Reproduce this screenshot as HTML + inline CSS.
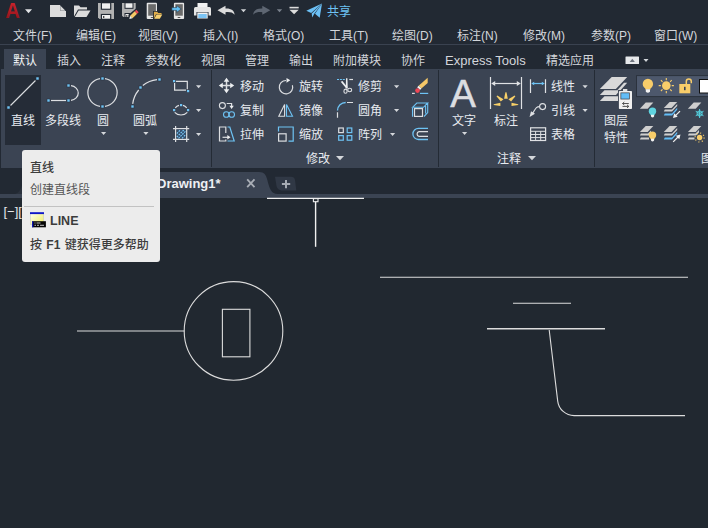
<!DOCTYPE html>
<html lang="zh-CN">
<head>
<meta charset="utf-8">
<title>AutoCAD</title>
<style>
html,body{margin:0;padding:0;}
body{width:708px;height:528px;overflow:hidden;background:#212830;position:relative;
 font-family:"Liberation Sans","Noto Sans CJK SC",sans-serif;font-size:12px;color:#e6e9ee;}
.abs{position:absolute;}
.t{z-index:2;position:absolute;white-space:nowrap;line-height:16px;height:16px;color:#e8ebf0;}
#top{left:0;top:0;width:708px;height:44px;background:#222933;}
#sep1{left:0;top:44px;width:708px;height:1px;background:#3a4250;}
#tabrow{left:0;top:45px;width:708px;height:24px;background:#222933;}
#acttab{left:4px;top:49px;width:42px;height:21px;background:#3b4453;}
#ribbon{left:1px;top:69px;width:707px;height:99px;background:#3b4453;}
#ribbonL{left:0;top:69px;width:1px;height:99px;background:#222933;}
#gap{left:0;top:168px;width:708px;height:26px;background:#222933;}
#band{left:0;top:194px;width:708px;height:4px;background:#3b4453;}
.vsep{position:absolute;width:1px;background:#242b35;top:70px;height:97px;}
#linebtn{left:5px;top:75px;width:36px;height:70px;background:#252c37;}
#tip{z-index:4;left:22px;top:150px;width:138px;height:112px;background:#ececec;border-radius:3px;}
.m{color:#d3d6db;}
.tt{z-index:6;position:absolute;white-space:nowrap;line-height:16px;height:16px;color:#3a3a3a;}
svg{position:absolute;left:0;top:0;overflow:visible;}
</style>
</head>
<body>
<div class="abs" id="top"></div>
<div class="abs" id="sep1"></div>
<div class="abs" id="tabrow"></div>
<div class="abs" id="acttab"></div>
<div class="abs" id="ribbon"></div>
<div class="abs" id="ribbonL"></div>
<div class="abs" id="gap"></div>
<div class="abs" id="band"></div>
<div class="vsep" style="left:211px"></div>
<div class="vsep" style="left:438px"></div>
<div class="vsep" style="left:594px"></div>
<div class="abs" id="linebtn"></div>

<!-- menu bar -->
<div class="t m" style="left:13px;top:28px">文件(F)</div>
<div class="t m" style="left:76px;top:28px">编辑(E)</div>
<div class="t m" style="left:138px;top:28px">视图(V)</div>
<div class="t m" style="left:203px;top:28px">插入(I)</div>
<div class="t m" style="left:263px;top:28px">格式(O)</div>
<div class="t m" style="left:329px;top:28px">工具(T)</div>
<div class="t m" style="left:392px;top:28px">绘图(D)</div>
<div class="t m" style="left:457px;top:28px">标注(N)</div>
<div class="t m" style="left:523px;top:28px">修改(M)</div>
<div class="t m" style="left:591px;top:28px">参数(P)</div>
<div class="t m" style="left:654px;top:28px">窗口(W)</div>
<div class="t" style="left:327px;top:4px;color:#6ec3f4">共享</div>

<!-- ribbon tabs -->
<div class="t" style="left:13px;top:53px;color:#f2f4f7">默认</div>
<div class="t m" style="left:57px;top:53px">插入</div>
<div class="t m" style="left:101px;top:53px">注释</div>
<div class="t m" style="left:145px;top:53px">参数化</div>
<div class="t m" style="left:201px;top:53px">视图</div>
<div class="t m" style="left:245px;top:53px">管理</div>
<div class="t m" style="left:289px;top:53px">输出</div>
<div class="t m" style="left:333px;top:53px">附加模块</div>
<div class="t m" style="left:401px;top:53px">协作</div>
<div class="t m" style="left:445px;top:53px;font-size:13px">Express Tools</div>
<div class="t m" style="left:546px;top:53px">精选应用</div>

<!-- ribbon labels -->
<div class="t" style="left:11px;top:113px">直线</div>
<div class="t" style="left:45px;top:113px">多段线</div>
<div class="t" style="left:97px;top:113px">圆</div>
<div class="t" style="left:133px;top:113px">圆弧</div>
<div class="t" style="left:240px;top:79px">移动</div>
<div class="t" style="left:240px;top:103px">复制</div>
<div class="t" style="left:240px;top:127px">拉伸</div>
<div class="t" style="left:299px;top:79px">旋转</div>
<div class="t" style="left:299px;top:103px">镜像</div>
<div class="t" style="left:299px;top:127px">缩放</div>
<div class="t" style="left:358px;top:79px">修剪</div>
<div class="t" style="left:358px;top:103px">圆角</div>
<div class="t" style="left:358px;top:127px">阵列</div>
<div class="t" style="left:306px;top:151px">修改</div>
<div class="t" style="left:452px;top:113px">文字</div>
<div class="t" style="left:494px;top:113px">标注</div>
<div class="t" style="left:551px;top:79px">线性</div>
<div class="t" style="left:551px;top:103px">引线</div>
<div class="t" style="left:551px;top:127px">表格</div>
<div class="t" style="left:497px;top:151px">注释</div>
<div class="t" style="left:604px;top:113px">图层</div>
<div class="t" style="left:604px;top:130px">特性</div>
<div class="t" style="left:701px;top:151px">图层</div>

<!-- doc tab -->
<div class="t" style="left:157px;top:176px;font-weight:bold;font-size:13px;color:#eef0f3">Drawing1*</div>
<div class="t" style="left:3.5px;top:204px;color:#e4e6e9;font-size:13px">[−][</div>

<svg id="art" width="708" height="528" viewBox="0 0 708 528">
<!-- ===== quick access toolbar ===== -->
<defs>
 <linearGradient id="ag" x1="0" y1="0" x2="0" y2="1"><stop offset="0" stop-color="#d4252d"/><stop offset="0.5" stop-color="#b01b23"/><stop offset="1" stop-color="#7a1117"/></linearGradient>
</defs>
<g id="qat">
 <!-- A logo -->
 <text x="5.300" y="18.300" font-family="Liberation Sans, sans-serif" font-weight="bold" font-size="21.500" fill="url(#ag)" textLength="14.600" lengthAdjust="spacingAndGlyphs">A</text>
 <path d="M25 9.300h7l-3.500 4z" fill="#e3e5e8"/>
 <!-- new -->
 <path d="M50 5h10l6 6v6H50z" fill="#dcdcdc"/>
 <path d="M60.500 5v6h6V5z" fill="#222933"/>
 <path d="M60.500 5.800V10.800H65.500z" fill="#dcdcdc"/>
 <!-- open -->
 <path d="M74 16.500V5.500h5l1.500 1.800h6.500V9.500H78z" fill="#dcdcdc"/>
 <path d="M74.800 17L78.600 10.500H90.500L86.500 17z" fill="#dcdcdc"/>
 <!-- save -->
 <g id="save">
  <path d="M98 3h16v16H99.500L98 17.500z" fill="#b2b2b2"/>
  <rect x="100.800" y="2.500" width="10.500" height="7.300" fill="#222933"/>
  <rect x="102" y="3.300" width="8.100" height="5.400" fill="#f0f0f0"/>
  <rect x="100.800" y="13.900" width="10.500" height="5.500" fill="#222933"/>
  <rect x="102" y="15" width="8.100" height="3.700" fill="#f0f0f0"/>
  <rect x="103.100" y="16" width="1.200" height="2" fill="#333"/>
 </g>
 <!-- save as -->
 <g>
  <path d="M122 3h13.700v9.500l-4.500 4.500H123.300L122 15.700z" fill="#b2b2b2"/>
  <rect x="124.500" y="2.500" width="9" height="6.300" fill="#222933"/>
  <rect x="125.500" y="3.300" width="7" height="4.500" fill="#f0f0f0"/>
  <rect x="124.500" y="13" width="5.500" height="4.500" fill="#222933"/>
  <rect x="125.500" y="14" width="3.500" height="3" fill="#f0f0f0"/>
  <rect x="126.300" y="15" width="1" height="2" fill="#333"/>
  <path d="M128.400 14.800L136.300 8.300L140.200 12.200L132.800 20L128.200 20.300z" fill="#222933"/>
  <path d="M130.100 15.800L134.800 11.300L137.100 13.700L132.500 18.300z" fill="#f4c866"/>
  <path d="M134.800 11.300L136.300 9.800L138.700 12.200L137.100 13.700z" fill="#ee4654"/>
  <path d="M130.100 15.800L132.500 18.300L129.300 19.100z" fill="#f4f4f4"/>
 </g>
 <!-- open from mobile -->
 <g>
  <rect x="146.700" y="2.700" width="10.300" height="16.400" rx="1" fill="#e6e6e6"/>
  <rect x="148.200" y="4.200" width="7.700" height="11.500" fill="#6a6a6a"/>
  <rect x="150.800" y="17" width="2.600" height="1" fill="#555"/>
  <path d="M153 19.300V11h5l1 1.300h3.700V19.300z" fill="#222933"/>
  <path d="M153.900 18.500V11.700h3.300l1 1.200h3.300V14.300H156z" fill="#e0ac48"/>
  <path d="M154.200 18.800L156.600 14.500h5.700L159.800 18.800z" fill="#f8d070"/>
 </g>
 <!-- save to mobile -->
 <g>
  <rect x="173.900" y="2.700" width="10.200" height="16.400" rx="1" fill="#e6e6e6"/>
  <rect x="175.300" y="4.200" width="7.500" height="11.500" fill="#6a6a6a"/>
  <rect x="177.700" y="17" width="2.600" height="1" fill="#555"/>
  <path d="M171.800 7.600h4.800V5.600l4.600 3.400l-4.600 3.400v-2h-4.800z" fill="#63c0f5" stroke="#222933" stroke-width="0.500"/>
 </g>
 <!-- print -->
 <g>
  <rect x="197.500" y="3" width="10" height="5" fill="#f2f2f2"/>
  <path d="M194 8.500q0-1.500 1.500-1.500h14q1.500 0 1.500 1.500V15.500H194z" fill="#e6e6e6"/>
  <rect x="196.500" y="12" width="12" height="7" fill="#222933"/>
  <rect x="197.300" y="12.500" width="10.400" height="6" fill="#f2f2f2"/>
  <rect x="198.300" y="14" width="8.400" height="4" fill="#7cc4f4"/>
 </g>
 <!-- undo -->
 <path d="M217.500 10.300L225.500 5.800V8.600C231 8.300 234.300 10.500 234.600 14.700C232.500 12.300 229.500 11.800 225.500 12.200V14.800z" fill="#dcdcdc"/>
 <path d="M240.800 9.300h5.400l-2.700 2.900z" fill="#cfd2d6"/>
 <!-- redo -->
 <path d="M269.800 10.300L261.800 5.800V8.600C256.300 8.300 253 10.500 252.700 14.700C254.800 12.300 257.800 11.800 261.800 12.200V14.800z" transform="translate(0.500 0)" fill="#5e6672"/>
 <path d="M276.800 9.300h5.400l-2.700 2.900z" fill="#7b828d"/>
 <!-- customize -->
 <rect x="289.500" y="6.800" width="9.200" height="1.600" fill="#dcdcdc"/>
 <path d="M289.500 9.800h9.200l-4.600 4.400z" fill="#dcdcdc"/>
 <!-- share plane -->
 <path d="M306.300 10.700L322 3.600L311.200 12.900z" fill="#6cc0f6"/>
 <path d="M311.700 13.500L322 3.600L314.300 13.700L312.200 17.400z" fill="#6cc0f6"/>
 <path d="M315 13.800L322 3.600L319.700 17.800z" fill="#6cc0f6"/>
</g>
<!-- ===== draw panel ===== -->
<g id="draw" fill="none" stroke="#dddfe2" stroke-width="1.200" stroke-linecap="butt">
 <!-- line -->
 <path d="M10.500 105.500L35.500 80.500" stroke-width="1.100"/>
 <!-- polyline -->
 <path d="M51 100.500H66"/>
 <path d="M71 100.400A8.200 7.450 0 0 0 71 85.600"/>
 <!-- circle -->
 <path d="M100 78.700A14.600 14 0 0 0 100 106.300"/>
 <path d="M105 78.700A14.600 14 0 0 1 105 106.300"/>
 <!-- arc -->
 <path d="M132.700 103.800A27.300 27.300 0 0 1 138.700 90"/>
 <path d="M142.800 85.500A27.300 27.300 0 0 1 157 79.700"/>
 <!-- rectangle -->
 <path d="M176 81.400H187.300V89.300 M186 90.100H174.600V83"/>
 <!-- ellipse -->
 <path d="M174.700 112.400Q177 115 181 115Q185 115 187.300 112.400" />
 <path d="M175.300 107.800Q176.800 106 179 105.400 M183 105.400Q185.200 106 186.700 107.800"/>
 <!-- hatch -->
 <path d="M175.600 126V142M186.700 126V142M173 128.600H189.200M173 139.400H189.200"/>
</g>
<g id="hatchfill" stroke="#7ccaf8" stroke-width="1.150" fill="none">
 <rect x="176.800" y="129.700" width="8.800" height="8.600" fill="#33506f" stroke="none"/>
 <path d="M176.800 133.500L180.600 129.700M176.800 137L184 129.800M178.500 138.300L185.600 131.200M182 138.300L185.600 134.700" stroke-dasharray="1.700 1"/>
</g>
<g id="grips" fill="#6ec3f4" stroke="#2c3440" stroke-width="0.600">
 <rect x="7" y="106" width="3" height="3"/><rect x="36" y="77" width="3" height="3"/>
 <rect x="47" y="99" width="3" height="3"/><rect x="67" y="99" width="3" height="3"/><rect x="67" y="84" width="3" height="3"/>
 <rect x="101" y="77" width="3" height="3"/><rect x="101" y="105" width="3" height="3"/>
 <rect x="131" y="105" width="3" height="3"/><rect x="139" y="86" width="3" height="3"/><rect x="158" y="78" width="3" height="3"/>
</g>
<g id="grips2" fill="#6ec3f4" stroke="none">
 <rect x="173" y="80" width="2.200" height="2.200"/><rect x="187" y="90" width="2.200" height="2.200"/>
 <rect x="180" y="104" width="2.200" height="2.200"/><rect x="173" y="109" width="2.200" height="2.200"/><rect x="187" y="109" width="2.200" height="2.200"/>
</g>
<g id="ddarrows" fill="#d4d7db" stroke="none">
 <path d="M101 132h5.200l-2.600 3z"/>
 <path d="M143.300 132h5.200l-2.600 3z"/>
 <path d="M196 85.200h5.200l-2.600 3z"/>
 <path d="M196 109h5.200l-2.600 3z"/>
 <path d="M196 133h5.200l-2.600 3z"/>
 <path d="M394 85.200h5.200l-2.600 3z"/>
 <path d="M394 109h5.200l-2.600 3z"/>
 <path d="M390 133h5.200l-2.600 3z"/>
 <path d="M462 132h5.200l-2.600 3z"/>
 <path d="M582.500 85.200h5.200l-2.600 3z"/>
 <path d="M582.500 109h5.200l-2.600 3z"/>
 <path d="M336 156h8l-4 4.200z"/>
 <path d="M528 156h8l-4 4.200z"/>
</g>
<!-- ===== modify panel ===== -->
<g id="modify" fill="none" stroke="#dcdee1" stroke-width="1.200">
 <!-- move -->
 <path d="M226.500 80.500V90.500M221.500 85.500H231.500" stroke-width="1.500"/>
 <path d="M226.500 77.700L229.300 81.700H223.700zM226.500 93.300L229.300 89.300H223.700zM218.800 85.500L222.800 82.700V88.300zM234.200 85.500L230.200 82.700V88.300z" fill="#eceef0" stroke="none"/>
 <!-- copy -->
 <circle cx="222.400" cy="105.600" r="3" stroke-width="1.100"/>
 <path d="M226.700 103.500H231.600V106.500" stroke-width="1.200"/>
 <path d="M229.400 105.800h4.400l-2.200 3.200z" fill="#eceef0" stroke="none"/>
 <circle cx="226.300" cy="114.500" r="2.800" stroke="#6ec3f4" stroke-width="1.100"/>
 <circle cx="231.700" cy="114.500" r="2.800" stroke="#6ec3f4" stroke-width="1.100"/>
 <!-- stretch -->
 <path d="M225.800 133V127H219.500V141H225.800V139.500"/>
 <path d="M227.500 127H229.800L234.200 141H227.500" stroke="#6ec3f4"/>
 <path d="M222.500 137.300H228" stroke-width="1.200"/>
 <path d="M227.300 135l3.200 2.300l-3.200 2.300z" fill="#eceef0" stroke="none"/>
 <!-- rotate -->
 <path d="M286 80.500A6.700 6.700 0 1 0 292.400 85.200" stroke-width="1.200"/>
 <path d="M286.500 77.900L290.300 80.200L286.500 82.700z" fill="#eceef0" stroke="none"/>
 <!-- mirror -->
 <path d="M284.600 104.500V116.300H278.800z" stroke-width="1.100"/>
 <path d="M286.500 104.500V116.300H292.500z" stroke="#6ec3f4" stroke-width="1.100"/>
 <!-- scale -->
 <path d="M278.500 131.500V127H293.200V141.200H288.500" stroke="#6ec3f4" stroke-width="1.200"/>
 <rect x="278.600" y="133.800" width="7.500" height="7.300" />
 <!-- trim -->
 <path d="M337 79.500H345.500" stroke="#6ec3f4" stroke-dasharray="2 0.900" stroke-width="1.200"/>
 <path d="M349.300 79.500H353" stroke-width="1.200"/>
 <path d="M340.700 81.700L342.500 81L347.200 87L346.300 88.600z" fill="#eceef0" stroke="none"/>
 <path d="M346 78.200H347.400L347.800 88.500H345.800z" fill="#eceef0" stroke="none"/>
 <ellipse cx="345.500" cy="91.200" rx="1.600" ry="2.100" stroke-width="1.100"/>
 <ellipse cx="349.700" cy="90" rx="2" ry="1.700" stroke-width="1.100"/>
 <!-- fillet -->
 <path d="M337.500 110.500A8.200 8.200 0 0 1 345.700 102.500" stroke="#6ec3f4" stroke-width="1.300"/>
 <path d="M347 102.500H353M337.500 112.200V117.700" stroke-width="1.200"/>
 <!-- array -->
 <rect x="338.700" y="128" width="4.600" height="4.600" stroke-width="1.200"/>
 <rect x="347.200" y="128" width="4.600" height="4.600" stroke="#6ec3f4" stroke-width="1.200"/>
 <rect x="338.700" y="135.600" width="4.600" height="4.600" stroke="#6ec3f4" stroke-width="1.200"/>
 <rect x="347.200" y="135.600" width="4.600" height="4.600" stroke="#6ec3f4" stroke-width="1.200"/>
 <!-- erase -->
 <path d="M427.700 77.800V83L421.400 88.600L418.600 85.800z" fill="#f5c868" stroke="none"/>
 <path d="M418.600 85.800L421.400 88.600L420 90L417.200 87.200z" fill="#f4f4f4" stroke="none"/>
 <circle cx="417.500" cy="90.600" r="2.300" fill="#ee4654" stroke="none"/>
 <path d="M412 93.400H414.800" stroke-width="1.200"/>
 <path d="M420 93.400H428.200" stroke="#6ec3f4" stroke-width="1.200"/>
 <!-- explode / box -->
 <path d="M412.500 108V116.800M412.500 107.300L416.800 103H427.700L423.500 107.300zM427.700 103V112.600L424 116.500M425.600 106V113.500" stroke="#6ec3f4" stroke-width="1.100"/>
 <rect x="414.500" y="108.600" width="8" height="7.800" stroke-width="1.200"/>
 <!-- offset -->
 <path d="M428 128.300H418.500A5.600 5.600 0 0 0 418.500 139.500H428" stroke="#6ec3f4" stroke-width="1.300"/>
 <path d="M428 131.600H419A2.400 2.400 0 0 0 419 136.300H428" stroke-width="1.200"/>
</g>
<!-- ===== annotation panel ===== -->
<text x="450.300" y="107" font-family="Liberation Sans, sans-serif" font-size="38.500" fill="#dcdee1" stroke="#dcdee1" stroke-width="0.500">A</text>
<g id="annot" fill="none" stroke="#dfe1e4" stroke-width="1.200">
 <!-- dimension -->
 <path d="M490.500 77V109M521.500 77V109" stroke-width="1.200"/>
 <path d="M494 83.500H518" stroke-width="1.200"/>
 <path d="M491.200 83.500L495.200 81V86zM520.800 83.500L516.800 81V86z" fill="#dfe1e4" stroke="none"/>
 <g fill="#f8d068" stroke="none">
  <path d="M504.100 98.800L505.400 92.300H506.500L507.800 98.800z"/>
  <path d="M500.800 101.500L496.500 96.200L497.300 95.600L503.500 99.200z"/>
  <path d="M511.100 101.500L515.400 96.200L514.600 95.600L508.400 99.200z"/>
  <path d="M500.400 102.800L493.700 104.300V105L500.400 106z"/>
  <path d="M511.500 102.800L518.200 104.300V105L511.500 106z"/>
 </g>
 <!-- linear -->
 <path d="M530.500 79.300V93M545.500 79.300V93" stroke-width="1.200"/>
 <path d="M533 83.500H543" stroke="#6ec3f4" stroke-width="1.200"/>
 <path d="M531.200 83.500L534.200 81.800V85.200zM544.800 83.500L541.800 81.800V85.200z" fill="#6ec3f4" stroke="none"/>
 <!-- leader -->
 <circle cx="542.600" cy="106.600" r="3" stroke-width="1.100"/>
 <path d="M539.600 106.700C535.800 106.700 535.800 108.500 532.300 113.700" stroke-width="1.200"/>
 <path d="M529.600 117L531 111.200L535 113.800z" fill="#dfe1e4" stroke="none"/>
 <!-- table -->
 <rect x="530.600" y="127.800" width="15" height="12.700" stroke-width="1.200"/>
 <path d="M530.600 131.300H545.600M530.600 134.500H545.600M530.600 137.600H545.600M535.600 131.300V140.500M540.700 131.300V140.500" stroke-width="1"/>
</g>
<!-- ribbon tab end button -->
<rect x="625.500" y="56.500" width="13.500" height="7.500" rx="0.500" fill="#e6e8ea"/>
<path d="M629.700 62h5.200l-2.600 -3.200z" fill="#707680"/>
<path d="M643.500 59h5l-2.500 3z" fill="#d4d7db"/>
<!-- ===== layer panel ===== -->
<g id="layers" stroke="none">
 <path d="M599.800 89L611.700 76.900H627.200L615.900 89z" fill="#d9d9d9"/>
 <path d="M599.800 95L604.500 90.200H620L616 95z" fill="#d9d9d9"/>
 <path d="M617 90.500L624 82.800H627.200L620.300 90.500z" fill="#d9d9d9"/>
 <path d="M599.800 101L604.500 96.200H619V101z" fill="#d9d9d9"/>
 <rect x="618" y="90.100" width="14.800" height="19.700" fill="#3b4453"/>
 <rect x="618.900" y="91" width="13.100" height="18" rx="0.800" fill="#f0f0f0"/>
 <rect x="623" y="89" width="4.300" height="2" fill="#e2e2e2"/>
 <rect x="620.500" y="92.500" width="9.200" height="6.900" fill="#333a44"/>
 <rect x="621.200" y="93.200" width="7.800" height="5.500" fill="#63bdf7"/>
 <path d="M622.500 103.500H628.800M624.300 102L622.500 103.500L624.300 105M622.500 106.400H628.800M627 104.900L628.800 106.400L627 107.900" stroke="#444" stroke-width="0.900" fill="none"/>
 <!-- combo -->
 <rect x="636.500" y="75.600" width="74" height="21" fill="#4d586c" stroke="#2b323d" stroke-width="1"/>
 <!-- bulb -->
 <circle cx="647.900" cy="83.900" r="5.200" fill="#f8cd6a"/>
 <path d="M645.300 86.500h5.200v3h-5.200z" fill="#f8cd6a"/>
 <path d="M645.800 89.200h4.200v2.600q-2.100 2 -4.200 0z" fill="#f4f4f4"/>
 <!-- sun -->
 <circle cx="666.300" cy="85.600" r="4.300" fill="#f8cd6a"/>
 <path d="M666.300 78V80.200M666.300 91V93.200M658.700 85.600H660.900M671.700 85.600H673.900M660.900 80.200L662.500 81.800M670.100 89.400L671.700 91M671.700 80.200L670.100 81.800M662.500 89.400L660.900 91" stroke="#f8cd6a" stroke-width="1.100" fill="none"/>
 <!-- lock -->
 <rect x="679.300" y="84" width="11" height="9.300" fill="#f8cd6a"/>
 <path d="M686.300 84V81.500A2.500 2.500 0 0 1 691.300 81.500V83.200" stroke="#f8cd6a" stroke-width="1.500" fill="none"/>
 <rect x="684" y="86.800" width="1.600" height="3.400" fill="#3b4453"/>
 <!-- color swatch -->
 <rect x="699.500" y="79.500" width="12" height="13.500" fill="#ffffff" stroke="#111" stroke-width="1"/>
 <!-- row 2 -->
 <path d="M639.900 108.700L645.700 102.600H653.300L647.700 108.700z" fill="#cfcfcf"/>
 <circle cx="652.500" cy="111.200" r="3.700" fill="#5fd3df"/>
 <path d="M650.500 113.500h4v1.800h-4z" fill="#5fd3df"/>
 <path d="M651 114.800h3.100v1.800q-1.550 1.800 -3.100 0z" fill="#f4f4f4"/>

 <path d="M663.800 107.900L669.600 102H677.200L671.600 107.900z" fill="#cfcfcf"/>
 <path d="M663.800 111.600L664.800 109.600H672L677.200 104V106L672 111.600z" fill="#cfcfcf"/>
 <path d="M663.800 115.500L664.800 113.500H672L677.200 107.700V109.700L672 115.500z" fill="#63bdf7"/>
 <path d="M680 111.200L675.500 115.700" stroke="#f0f0f0" stroke-width="1.200" fill="none"/>
 <path d="M673 118L674.200 113.300L677.700 116.800z" fill="#f0f0f0"/>

 <path d="M687.900 108.700L693.700 102.600H701.300L695.700 108.700z" fill="#cfcfcf"/>
 <g stroke="#55d3e2" stroke-width="1" fill="none">
  <path d="M699.600 109V118M695.700 111.250L703.500 115.750M695.700 115.750L703.500 111.250"/>
  <path d="M699.600 110.700L702 112.100V114.900L699.600 116.300L697.200 114.900V112.100z"/>
 </g>
 <!-- row 3 -->
 <path d="M639.900 131.900L645.700 126H653.300L647.700 131.900z" fill="#cfcfcf"/>
 <path d="M639.900 135.600L640.900 133.600H648L651 130.500V135.600z" fill="#cfcfcf"/>
 <path d="M639.900 139.500L640.900 137.500H649V139.500z" fill="#cfcfcf"/>
 <circle cx="652.500" cy="135.100" r="3.700" fill="#f8cd6a"/>
 <path d="M650.500 137.400h4v1.800h-4z" fill="#f8cd6a"/>
 <path d="M651 138.700h3.100v1.800q-1.550 1.800 -3.100 0z" fill="#f4f4f4"/>

 <path d="M663.800 131.900L669.600 126H677.200L671.600 131.900z" fill="#cfcfcf"/>
 <path d="M663.800 135.600L664.800 133.600H672L677.200 128V130L672 135.600z" fill="#cfcfcf"/>
 <path d="M663.800 139.500L664.800 137.500H672L677.200 131.700V133.700L672 139.500z" fill="#63bdf7"/>
 <path d="M673.200 141.800L678 137" stroke="#f0f0f0" stroke-width="1.200" fill="none"/>
 <path d="M680.500 134.600L679.300 139.300L675.800 135.800z" fill="#f0f0f0"/>

 <path d="M687.900 131.900L693.700 126H701.300L695.700 131.900z" fill="#cfcfcf"/>
 <path d="M687.900 135.600L688.900 133.600H695.500L699 130V132.500L696 135.600z" fill="#cfcfcf"/>
 <path d="M687.900 139.500L688.900 137.500H694.500V139.500z" fill="#cfcfcf"/>
 <circle cx="699.600" cy="137.500" r="2.700" fill="#f8cd6a"/>
 <circle cx="699.600" cy="137.500" r="4.500" fill="none" stroke="#f8cd6a" stroke-width="1.200" stroke-dasharray="1.100 2.430"/>
</g>
<!-- ===== doc tabs ===== -->
<path d="M12 194.500C18 194.500 20 191 22 185.500V194.500z" fill="#2b323d"/>
<path d="M22 194V185C24 177 25 172 31 172H259C264.500 172 266 175 267.200 179.500C269.500 189 271.500 194 277.500 194H708V198H0V194z" fill="#3b4453"/>
<path d="M275 176.800H291Q294.300 176.800 295 180L296.300 190.400H281.500Q277.800 190.400 276.500 186z" fill="#303845"/>
<path d="M247.200 179.400L254.500 187.200M254.500 179.400L247.200 187.200" stroke="#a9aeb6" stroke-width="1.800" fill="none"/>
<path d="M286 180V188.200M281.900 184.100H290.200" stroke="#a6abb3" stroke-width="2" fill="none"/>
<!-- ===== canvas drawing ===== -->
<g id="cad" fill="none" stroke="#dcdcdc" stroke-width="1.100">
 <path d="M267 198.450H364" stroke="#f0f0f0" stroke-width="1.300"/>
 <path d="M315.600 201V246.800" stroke="#f0f0f0" stroke-width="1.400"/>
 <rect x="313.400" y="198.600" width="4.600" height="3.100" fill="#212830" stroke="#f0f0f0" stroke-width="1.100"/>
 <path d="M77 331H184.500"/>
 <circle cx="233.500" cy="330.900" r="49.300"/>
 <rect x="222.400" y="309.300" width="27.500" height="47.500"/>
 <path d="M380 277.300H688"/>
 <path d="M513 303.200H571"/>
 <path d="M487 328.800H605" stroke-width="1.500"/>
 <path d="M549.200 330L557.700 401.100A16.500 16.500 0 0 0 574.100 415.600H685"/>
</g>
</svg>

<!-- tooltip -->
<div class="abs" id="tip"></div>
<div class="tt" style="left:30px;top:160px;font-weight:500;color:#3c3c3c">直线</div>
<div class="tt" style="left:30px;top:182px;color:#555">创建直线段</div>
<div class="abs" style="z-index:6;left:24px;top:206px;width:130px;height:1px;background:#c2c2c2"></div>
<div class="tt" style="left:50px;top:213px;font-weight:bold;font-size:12.5px;color:#3c3c3c">LINE</div>
<div class="tt" style="left:30px;top:237px;font-weight:500;word-spacing:1px;color:#3c3c3c">按 <b>F1</b> 键获得更多帮助</div>
<!-- tooltip icon -->
<svg width="708" height="528" viewBox="0 0 708 528" style="z-index:5">
 <defs><linearGradient id="yg" x1="0" y1="0" x2="1" y2="0.800"><stop offset="0" stop-color="#fffff0"/><stop offset="1" stop-color="#f0f070"/></linearGradient></defs>
 <rect x="30.300" y="213.500" width="13.300" height="11.200" fill="url(#yg)" stroke="#c4c4c0" stroke-width="0.500"/>
 <rect x="30" y="212.200" width="14" height="1.900" fill="#1018c8"/>
 <rect x="32.100" y="221.200" width="13.800" height="6.100" fill="#050505"/>
 <rect x="32.100" y="221.200" width="1.200" height="6.100" fill="#1018c8"/>
 <path d="M34.500 223H35.500M36.500 223H40.500M34.500 225.300H36M37 225.300H39M40 225.300H44" stroke="#d8d8d8" stroke-width="0.900"/>
</svg>
</body>
</html>
